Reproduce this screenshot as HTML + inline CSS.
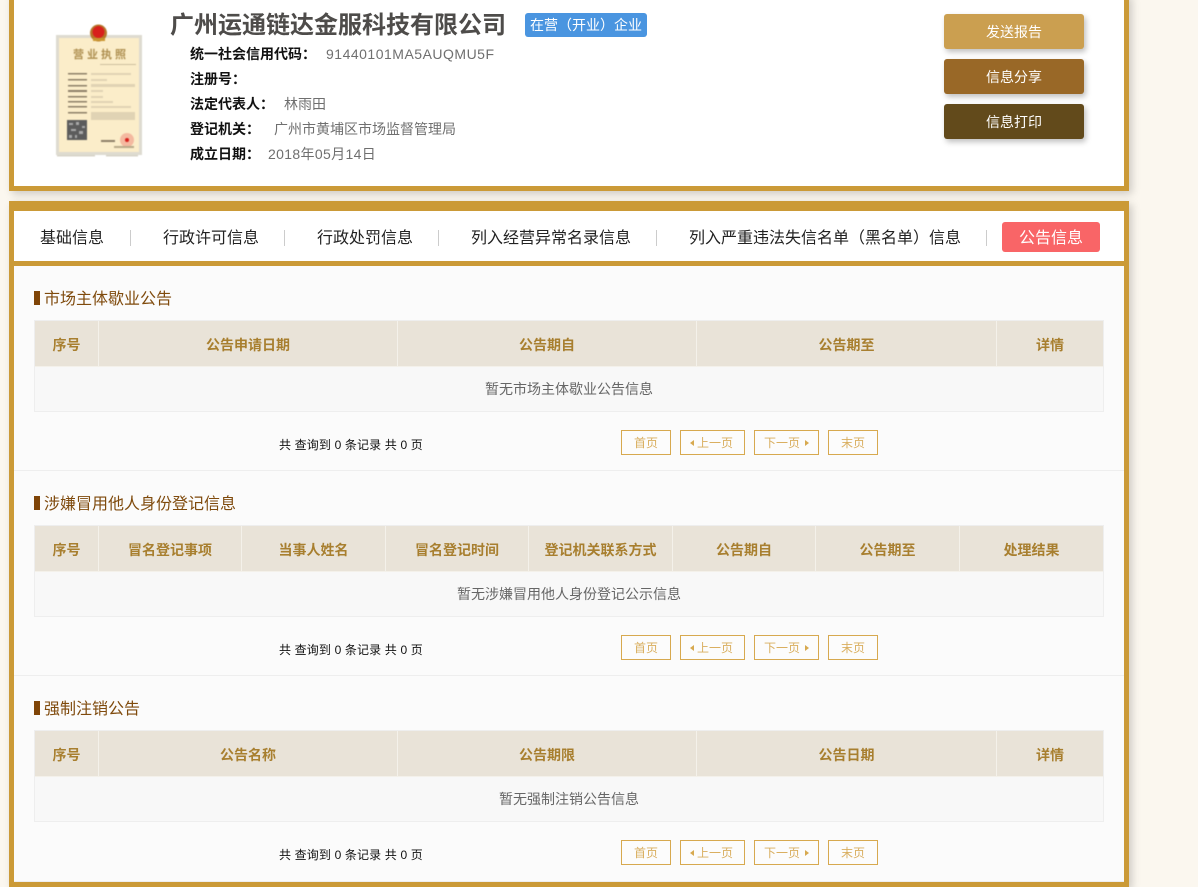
<!DOCTYPE html>
<html lang="zh-CN"><head><meta charset="utf-8"><title>公告信息</title>
<style>
*{box-sizing:border-box;margin:0;padding:0}
html,body{width:1198px;height:887px;overflow:hidden;background:#fbf7ef}
body{position:relative;font-family:"Liberation Sans","Noto Sans CJK SC",sans-serif;font-size:14px}
.a{position:absolute;white-space:nowrap}
.card{position:absolute;left:9px;width:1120px;border:5px solid #cb9a37;box-shadow:3px 3px 8px rgba(0,0,0,.18)}
.lb{position:absolute;left:190px;height:24px;line-height:24px;font-weight:bold;color:#111;font-size:14px;white-space:nowrap}
.v{position:absolute;height:24px;line-height:24px;color:#6f6f6f;font-size:14px;white-space:nowrap}
.btn{position:absolute;left:944px;width:140px;height:35px;line-height:37px;text-align:center;color:#fff;font-size:14px;border-radius:3px;box-shadow:2px 3px 6px rgba(0,0,0,.25)}
.nav{position:absolute;top:225px;height:24px;line-height:28px;font-size:16px;color:#222;white-space:nowrap}
.dv{position:absolute;top:230px;width:1px;height:16px;background:#ccc}
.sec{position:absolute;left:14px;width:1110px;height:205px}
.bar{position:absolute;left:20px;top:25px;width:6px;height:14px;background:#7f4407}
.st{position:absolute;left:30px;top:20px;height:24px;line-height:28px;font-size:16px;color:#7f4a0c;white-space:nowrap}
.tb{position:absolute;left:20px;top:54px;width:1070px;height:92px;background:#f8f8f8;border:1px solid #eee}
.hd{position:absolute;left:0;top:0;height:46px;background:#e9e3d8;line-height:48px;text-align:center;font-size:14px;font-weight:bold;color:#a87f2f;border-right:1px solid #f4f1ea;border-bottom:1px solid #f4f1ea;white-space:nowrap}
.em{position:absolute;left:0;width:1068px;top:46px;height:44px;line-height:44px;text-align:center;color:#666;font-size:14px}
.cnt{position:absolute;left:265px;top:167px;height:22px;line-height:24px;font-size:12px;letter-spacing:.15px;color:#111;white-space:nowrap}
.pg{position:absolute;top:164px;height:25px;line-height:25px;border:1px solid #d7a94f;text-align:center;color:#d9ae5e;font-size:12px;background:#fcfcfc;white-space:nowrap}
.pg i{display:inline-block;width:0;height:0;border-top:3px solid transparent;border-bottom:3px solid transparent;vertical-align:1px}
.l{border-right:4px solid #d7a94f;margin-left:-2px;margin-right:3px}
.r{border-left:4px solid #d7a94f;margin-left:5px}
.ln{position:absolute;left:0;width:1110px;top:204px;height:1px;background:#eee}
</style></head><body>

<div class="card" style="top:-6px;height:197px;background:#fff"></div>

<svg class="a" style="left:52px;top:22px;filter:blur(.4px)" width="94" height="138" viewBox="0 0 94 138">
<rect x="4" y="13" width="86" height="120" fill="#dedbd0"/>
<rect x="7" y="16" width="80" height="114" fill="#fbedc9"/>
<circle cx="46.5" cy="11" r="8.5" fill="#b5762a"/><circle cx="46.5" cy="10" r="6" fill="#d8201c"/><rect x="41" y="16" width="12" height="3" fill="#c9952f"/>
<text x="21" y="36" font-size="11" font-weight="bold" fill="#ae8f50" letter-spacing="3" font-family="Noto Sans CJK SC">营业执照</text>
<rect x="48" y="42" width="36" height="1" fill="#cdbf9f"/>
<g fill="#8d8068"><rect x="16" y="51" width="19" height="1.5"/><rect x="16" y="57" width="19" height="1.5"/><rect x="16" y="63" width="19" height="1.5"/><rect x="16" y="68" width="19" height="2"/><rect x="16" y="74" width="19" height="1.5"/><rect x="16" y="79" width="19" height="1.5"/><rect x="16" y="84" width="19" height="1.5"/><rect x="16" y="90" width="19" height="1.5"/></g>
<g fill="#e0d3b4"><rect x="39" y="51" width="40" height="2"/><rect x="39" y="57" width="16" height="2"/><rect x="39" y="62" width="44" height="3"/><rect x="39" y="68" width="12" height="2"/><rect x="39" y="74" width="12" height="2"/><rect x="39" y="79" width="22" height="2"/><rect x="39" y="84" width="40" height="2"/><rect x="39" y="90" width="44" height="8"/></g>
<rect x="15" y="98" width="20" height="20" fill="#5c5c5c"/>
<g fill="#a9a9a9"><rect x="17" y="101" width="4" height="2"/><rect x="24" y="100" width="3" height="3"/><rect x="30" y="104" width="3" height="2"/><rect x="19" y="107" width="5" height="2"/><rect x="27" y="109" width="4" height="3"/><rect x="17" y="113" width="3" height="3"/><rect x="23" y="113" width="2" height="3"/></g>
<circle cx="75" cy="118" r="7" fill="#f4b9a0"/><circle cx="75" cy="118" r="2" fill="#d8201c"/>
<rect x="49" y="118" width="14" height="2" fill="#8d8068"/><rect x="62" y="124" width="20" height="2" fill="#b9a98a"/>
<rect x="5" y="133" width="38" height="1.5" fill="#d8d4c8"/><rect x="54" y="133" width="32" height="1.5" fill="#d8d4c8"/>
</svg>

<div class="a" style="left:170px;top:8px;height:36px;line-height:36px;font-size:24px;font-weight:bold;color:#4e4c4a">广州运通链达金服科技有限公司</div>
<div class="a" style="left:525px;top:13px;width:122px;height:24px;line-height:25px;background:#4a95e0;border-radius:3px;color:#fff;font-size:14px;text-align:center">在营（开业）企业</div>

<div class="lb" style="top:42px">统一社会信用代码：</div><div class="v" style="left:326px;top:42px;letter-spacing:.5px">91440101MA5AUQMU5F</div>
<div class="lb" style="top:67px">注册号：</div>
<div class="lb" style="top:92px">法定代表人：</div><div class="v" style="left:284px;top:92px">林雨田</div>
<div class="lb" style="top:117px">登记机关：</div><div class="v" style="left:274px;top:117px">广州市黄埔区市场监督管理局</div>
<div class="lb" style="top:142px">成立日期：</div><div class="v" style="left:268px;top:142px;letter-spacing:.35px">2018年05月14日</div>

<div class="btn" style="top:14px;background:#cb9f50">发送报告</div>
<div class="btn" style="top:59px;background:#996827">信息分享</div>
<div class="btn" style="top:104px;background:#624a1b">信息打印</div>

<div class="card" style="top:201px;height:686px;background:#fbfbfb;border-top-width:10px"></div>
<div class="a" style="left:14px;top:211px;width:1110px;height:50px;background:#fff"></div>
<div class="a" style="left:14px;top:261px;width:1110px;height:5px;background:#cb9a37"></div>
<div class="a" style="left:14px;top:881px;width:1110px;height:1px;background:#eee"></div>

<div class="nav" style="left:40px">基础信息</div><div class="dv" style="left:130px"></div>
<div class="nav" style="left:163px">行政许可信息</div><div class="dv" style="left:284px"></div>
<div class="nav" style="left:317px">行政处罚信息</div><div class="dv" style="left:438px"></div>
<div class="nav" style="left:471px">列入经营异常名录信息</div><div class="dv" style="left:656px"></div>
<div class="nav" style="left:689px">列入严重违法失信名单（黑名单）信息</div><div class="dv" style="left:986px"></div>
<div class="a" style="left:1002px;top:222px;width:98px;height:30px;line-height:33px;background:#f96567;border-radius:3px;color:#fff;font-size:16px;text-align:center">公告信息</div>

<div class="sec" style="top:266px">
<div class="bar"></div><div class="st">市场主体歇业公告</div>
<div class="tb">
<div class="hd" style="left:0;width:64px">序号</div><div class="hd" style="left:64px;width:299px">公告申请日期</div><div class="hd" style="left:363px;width:299px">公告期自</div><div class="hd" style="left:662px;width:300px">公告期至</div><div class="hd" style="left:962px;width:106px;border-right:0">详情</div>
<div class="em">暂无市场主体歇业公告信息</div></div>
<div class="cnt">共 查询到 0 条记录 共 0 页</div>
<div class="pg" style="left:607px;width:50px">首页</div><div class="pg" style="left:666px;width:65px"><i class="l"></i>上一页</div><div class="pg" style="left:740px;width:65px">下一页<i class="r"></i></div><div class="pg" style="left:814px;width:50px">末页</div>
<div class="ln"></div>
</div>

<div class="sec" style="top:471px">
<div class="bar"></div><div class="st">涉嫌冒用他人身份登记信息</div>
<div class="tb">
<div class="hd" style="left:0;width:64px">序号</div><div class="hd" style="left:64px;width:143px">冒名登记事项</div><div class="hd" style="left:207px;width:144px">当事人姓名</div><div class="hd" style="left:351px;width:143px">冒名登记时间</div><div class="hd" style="left:494px;width:144px">登记机关联系方式</div><div class="hd" style="left:638px;width:143px">公告期自</div><div class="hd" style="left:781px;width:144px">公告期至</div><div class="hd" style="left:925px;width:143px;border-right:0">处理结果</div>
<div class="em">暂无涉嫌冒用他人身份登记公示信息</div></div>
<div class="cnt">共 查询到 0 条记录 共 0 页</div>
<div class="pg" style="left:607px;width:50px">首页</div><div class="pg" style="left:666px;width:65px"><i class="l"></i>上一页</div><div class="pg" style="left:740px;width:65px">下一页<i class="r"></i></div><div class="pg" style="left:814px;width:50px">末页</div>
<div class="ln"></div>
</div>

<div class="sec" style="top:676px">
<div class="bar"></div><div class="st">强制注销公告</div>
<div class="tb">
<div class="hd" style="left:0;width:64px">序号</div><div class="hd" style="left:64px;width:299px">公告名称</div><div class="hd" style="left:363px;width:299px">公告期限</div><div class="hd" style="left:662px;width:300px">公告日期</div><div class="hd" style="left:962px;width:106px;border-right:0">详情</div>
<div class="em">暂无强制注销公告信息</div></div>
<div class="cnt">共 查询到 0 条记录 共 0 页</div>
<div class="pg" style="left:607px;width:50px">首页</div><div class="pg" style="left:666px;width:65px"><i class="l"></i>上一页</div><div class="pg" style="left:740px;width:65px">下一页<i class="r"></i></div><div class="pg" style="left:814px;width:50px">末页</div>
</div>

</body></html>
